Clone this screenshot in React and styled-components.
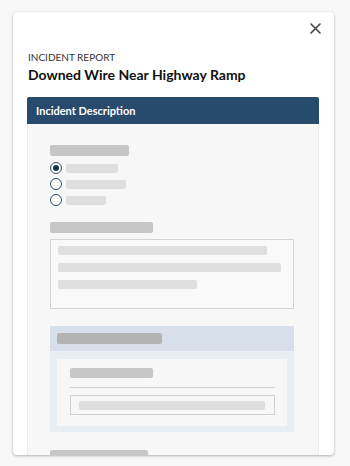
import React from "react";
import styled, { createGlobalStyle } from "styled-components";

const GlobalStyle = createGlobalStyle`
  html, body {
    margin: 0;
    padding: 0;
    background: #f8f8f8;
    font-family: Lato, "Open Sans", sans-serif;
  }
  * {
    box-sizing: border-box;
  }
`;

const Page = styled.div`
  width: 350px;
  height: 466px;
  padding: 12px 16px 11px 13px;
`;

const Card = styled.div`
  height: 443px;
  background: #fff;
  border-radius: 4px;
  box-shadow: 0 1px 3px rgba(0, 0, 0, 0.28), 0 0 1px rgba(0, 0, 0, 0.12);
  overflow: hidden;
  padding: 0 15px 0 14px;
`;

const CloseRow = styled.div`
  display: flex;
  justify-content: flex-end;
  height: 39px;
  padding: 10px 0 0;
`;

const CloseButton = styled.button`
  border: none;
  background: none;
  padding: 0;
  margin-right: -2px;
  width: 12px;
  height: 12px;
  display: flex;
  align-items: center;
  justify-content: center;
  color: #444;
  cursor: pointer;
`;

const Eyebrow = styled.div`
  font-size: 10px;
  line-height: 12px;
  color: #333;
  text-transform: uppercase;
  padding-left: 1px;
`;

const Title = styled.h1`
  margin: 3px 0 0;
  font-size: 14px;
  line-height: 18px;
  font-weight: 700;
  color: #111;
  padding-left: 1px;
`;

const SectionHeader = styled.div`
  margin-top: 13px;
  height: 27px;
  background: #284a6d;
  border-radius: 2px 2px 0 0;
  display: flex;
  align-items: center;
  padding-left: 9px;
  color: #fff;
  font-size: 11px;
  font-weight: 700;
`;

const Panel = styled.div`
  background: #f7f7f7;
  border: 1px solid #ececec;
  border-top: none;
  padding: 21px 24px 40px 22px;
  display: flex;
  flex-direction: column;
`;

const Bar = styled.div`
  width: ${(p) => p.$w}px;
  height: ${(p) => p.$h || 10}px;
  background: ${(p) => p.$c || "#c6c6c6"};
  border-radius: 2px;
  flex-shrink: 0;
`;

const RadioList = styled.div`
  display: flex;
  flex-direction: column;
  gap: 4px;
  margin-top: 6px;
`;

const RadioRow = styled.div`
  display: flex;
  align-items: center;
  gap: 4px;
  height: 12px;
`;

const Radio = styled.span`
  width: 12px;
  height: 12px;
  border-radius: 50%;
  border: 1.2px solid #2c4a68;
  background: #fff;
  display: flex;
  align-items: center;
  justify-content: center;
  &::after {
    content: "";
    display: ${(p) => (p.$checked ? "block" : "none")};
    width: 6px;
    height: 6px;
    border-radius: 50%;
    background: #173553;
  }
`;

const Group = styled.div`
  margin-top: ${(p) => p.$mt || 0}px;
  display: flex;
  flex-direction: column;
`;

const TextBox = styled.div`
  margin-top: 6px;
  height: 70px;
  border: 1px solid #d2d2d2;
  background: #f9f9f9;
  padding: 6px 7px;
  display: flex;
  flex-direction: column;
  gap: 8px;
`;

const SubSection = styled.div`
  margin-top: 17px;
  background: #e9eef4;
  padding-bottom: 6px;
`;

const SubHeader = styled.div`
  height: 25px;
  background: #d7e0ea;
  display: flex;
  align-items: center;
  padding-left: 7px;
`;

const SubBody = styled.div`
  margin: 8px 7px 0;
  background: #f7f7f7;
  padding: 9px 12px 11px 13px;
  display: flex;
  flex-direction: column;
`;

const Divider = styled.div`
  margin-top: 9px;
  height: 1px;
  background: #cfcfcf;
`;

const InputBox = styled.div`
  margin-top: 7px;
  height: 20px;
  border: 1px solid #cfcfcf;
  display: flex;
  align-items: center;
  padding: 0 8px;
`;

const options = [
  { w: 52, checked: true },
  { w: 60 },
  { w: 40 },
];

export default function App() {
  return (
    <>
      <GlobalStyle />
      <Page>
        <Card>
          <CloseRow>
            <CloseButton aria-label="Close">
              <svg width="11" height="11" viewBox="0 0 11 11">
                <path d="M1 1 L10 10 M10 1 L1 10" stroke="currentColor" strokeWidth="1.6" strokeLinecap="round" />
              </svg>
            </CloseButton>
          </CloseRow>
          <Eyebrow>Incident Report</Eyebrow>
          <Title>Downed Wire Near Highway Ramp</Title>
          <SectionHeader>Incident Description</SectionHeader>
          <Panel>
            <Group>
              <Bar $w={79} $h={11} />
              <RadioList>
                {options.map((o, i) => (
                  <RadioRow key={i}>
                    <Radio $checked={o.checked} />
                    <Bar $w={o.w} $h={9} $c="#dedede" />
                  </RadioRow>
                ))}
              </RadioList>
            </Group>
            <Group $mt={16}>
              <Bar $w={103} $h={11} />
              <TextBox>
                <Bar $w={209} $h={9} $c="#dfdfdf" />
                <Bar $w={223} $h={9} $c="#dfdfdf" />
                <Bar $w={139} $h={9} $c="#dfdfdf" />
              </TextBox>
            </Group>
            <SubSection>
              <SubHeader>
                <Bar $w={105} $h={11} $c="#b3b3b3" />
              </SubHeader>
              <SubBody>
                <Bar $w={83} $h={10} />
                <Divider />
                <InputBox>
                  <Bar $w={186} $h={9} $c="#dedede" />
                </InputBox>
              </SubBody>
            </SubSection>
            <Group $mt={18}>
              <Bar $w={98} $h={11} />
            </Group>
          </Panel>
        </Card>
      </Page>
    </>
  );
}
